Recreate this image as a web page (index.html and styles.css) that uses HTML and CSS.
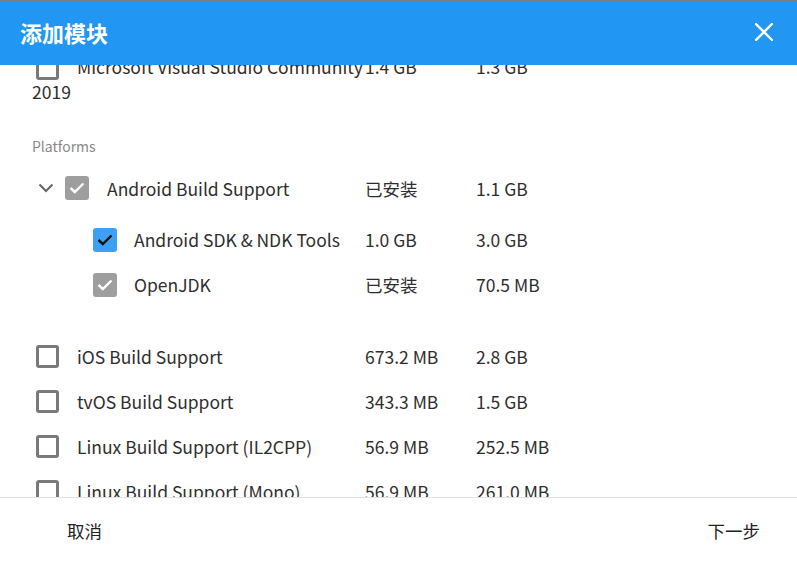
FILE: index.html
```html
<!DOCTYPE html>
<html lang="zh">
<head>
<meta charset="utf-8">
<title>添加模块</title>
<link rel="stylesheet" href="styles.css">
</head>
<body>
<div class="dialog">
  <header class="header">
    <h1 class="title">添加模块</h1>
    <button class="close" aria-label="关闭">
      <svg width="18" height="18" viewBox="0 0 18 18"><path d="M1 1 L17 17 M17 1 L1 17" stroke="#fff" stroke-width="2.4" stroke-linecap="square" fill="none"/></svg>
    </button>
  </header>
  <main class="body">
    <div class="content">
      <div class="row row-wrap">
        <div class="name wrap"><span class="cb cb-off inline"></span>Microsoft Visual Studio Community 2019</div>
        <div class="size">1.4 GB</div>
        <div class="size2">1.3 GB</div>
      </div>

      <div class="section">Platforms</div>

      <div class="row row-parent">
        <div class="name">
          <svg class="chev" width="16" height="10" viewBox="0 0 16 10"><path d="M1.5 1.5 L8 8 L14.5 1.5" stroke="#666" stroke-width="2" fill="none"/></svg>
          <span class="cb cb-gray"><svg width="16" height="12" viewBox="0 0 16 12"><path d="M1.5 6 L5.8 10 L14.5 1.5" stroke="#fff" stroke-width="2.4" fill="none"/></svg></span>
          <span class="label">Android Build Support</span>
        </div>
        <div class="size">已安装</div>
        <div class="size2">1.1 GB</div>
      </div>
      <div class="children">
        <div class="row">
          <div class="name child">
            <span class="cb cb-blue"><svg width="16" height="12" viewBox="0 0 16 12"><path d="M1.5 6 L5.8 10 L14.5 1.5" stroke="#111" stroke-width="2.4" fill="none"/></svg></span>
            <span class="label">Android SDK &amp; NDK Tools</span>
          </div>
          <div class="size">1.0 GB</div>
          <div class="size2">3.0 GB</div>
        </div>
        <div class="row">
          <div class="name child">
            <span class="cb cb-gray"><svg width="16" height="12" viewBox="0 0 16 12"><path d="M1.5 6 L5.8 10 L14.5 1.5" stroke="#fff" stroke-width="2.4" fill="none"/></svg></span>
            <span class="label">OpenJDK</span>
          </div>
          <div class="size">已安装</div>
          <div class="size2">70.5 MB</div>
        </div>
      </div>

      <div class="row">
        <div class="name"><span class="cb cb-off"></span><span class="label">iOS Build Support</span></div>
        <div class="size">673.2 MB</div>
        <div class="size2">2.8 GB</div>
      </div>
      <div class="row">
        <div class="name"><span class="cb cb-off"></span><span class="label">tvOS Build Support</span></div>
        <div class="size">343.3 MB</div>
        <div class="size2">1.5 GB</div>
      </div>
      <div class="row">
        <div class="name"><span class="cb cb-off"></span><span class="label">Linux Build Support (IL2CPP)</span></div>
        <div class="size">56.9 MB</div>
        <div class="size2">252.5 MB</div>
      </div>
      <div class="row">
        <div class="name"><span class="cb cb-off"></span><span class="label">Linux Build Support (Mono)</span></div>
        <div class="size">56.9 MB</div>
        <div class="size2">261.0 MB</div>
      </div>
    </div>
  </main>
  <footer class="footer">
    <button class="btn">取消</button>
    <button class="btn">下一步</button>
  </footer>
</div>
</body>
</html>
```

FILE: styles.css
```css
* { box-sizing: border-box; }
html, body { margin: 0; padding: 0; background: #fff; }
body {
  font-family: "Noto Sans CJK SC", "Noto Sans", sans-serif;
  color: #2e2e2e;
  font-size: 17.5px;
}
.dialog {
  height: 576px;
  display: flex;
  flex-direction: column;
  border-top: 1px solid #808080;
  overflow: hidden;
}
.header {
  height: 64px;
  flex: none;
  background: #2196f3;
  display: flex;
  align-items: center;
  justify-content: space-between;
  padding: 0 24px 0 20px;
  position: relative;
  z-index: 1;
}
.title {
  margin: 0 0 3px;
  color: #fff;
  font-size: 22px;
  font-weight: 700;
  line-height: 1;
}
.close {
  background: none;
  border: 0;
  padding: 0;
  width: 18px;
  height: 18px;
  margin-bottom: 3px;
  display: flex;
  align-items: center;
  justify-content: center;
  cursor: pointer;
}
.body {
  flex: 1;
  overflow: hidden;
  padding: 0 32px;
}
.content {
  margin-top: -10px;
}
.row {
  display: grid;
  grid-template-columns: 333px 110px 1fr;
  align-items: center;
  height: 45px;
}
.row-wrap {
  height: auto;
  align-items: start;
  line-height: 24px;
}
.row-parent { height: 46px; }
.name {
  display: flex;
  align-items: center;
  white-space: nowrap;
}
.name.wrap {
  display: block;
  white-space: normal;
}
.name.child { padding-left: 57px; }
.size2 { padding-left: 1px; }
.label { margin-left: 18px; }
.name.child .label { margin-left: 17px; }
.cb {
  flex: none;
  width: 24px;
  height: 24px;
  border-radius: 3px;
  display: inline-flex;
  align-items: center;
  justify-content: center;
  margin-left: 4px;
}
.cb-off {
  border: 3px solid #7a7a7a;
  width: 23px;
  height: 23px;
}
.cb.inline {
  vertical-align: -6px;
  margin-right: 18px;
}
.cb-gray { background: #9e9e9e; }
.cb-blue { background: #3ea0f5; }
.row-parent .cb { margin-left: 11px; }
.chev { margin-left: 6px; flex: none; }
.row-parent .label { margin-left: 18px; }
.section {
  margin-top: 32px;
  height: 20px;
  line-height: 20px;
  font-size: 14px;
  color: #888;
  margin-bottom: 9px;
}
.children {
  padding-top: 6px;
  padding-bottom: 27px;
}
.footer {
  flex: none;
  height: 79px;
  border-top: 1px solid #e2e2e2;
  display: flex;
  align-items: flex-start;
  justify-content: space-between;
  padding: 21px 37px 0 67px;
}
.btn {
  background: none;
  border: 0;
  padding: 0;
  font-family: inherit;
  font-size: 17.5px;
  line-height: 24px;
  color: #222;
  cursor: pointer;
}
```
